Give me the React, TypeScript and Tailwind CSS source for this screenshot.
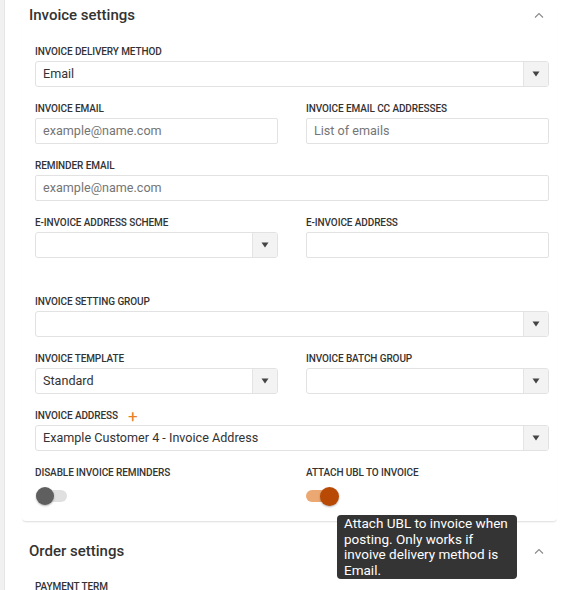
import React from "react";

const font = { fontFamily: "Roboto, 'Noto Sans', sans-serif" };

function Label({ children }: { children: React.ReactNode }) {
  return (
    <div className="h-[14px] mb-[2px] flex items-center text-[10px] font-medium uppercase text-[#333] leading-[14px] tracking-[-0.1px]">
      {children}
    </div>
  );
}

function Arrow() {
  return (
    <div className="w-[25px] h-full flex items-center justify-center bg-[#f3f3f3] border-l border-[#e4e4e4]">
      <svg width="8" height="6" viewBox="0 0 8 6">
        <path d="M0.5 0.5 L7.5 0.5 L4 5.5 Z" fill="#444" />
      </svg>
    </div>
  );
}

function Select({ value }: { value?: string }) {
  return (
    <div className="h-[26px] flex border border-[#e2e2e2] rounded-[3px] bg-white overflow-hidden">
      <div className="flex-1 flex items-center px-[7px] text-[12.6px] text-[#333]">{value}</div>
      <Arrow />
    </div>
  );
}

function Input({ placeholder }: { placeholder?: string }) {
  return (
    <div className="h-[26px] flex items-center border border-[#e2e2e2] rounded-[2px] bg-white px-[7px] text-[12.6px] text-[#757575]">
      {placeholder}
    </div>
  );
}

function Field({ label, children, extra }: { label: React.ReactNode; children: React.ReactNode; extra?: string }) {
  return (
    <div className={extra || "mb-[15px]"}>
      <Label>{label}</Label>
      {children}
    </div>
  );
}

function Chevron() {
  return (
    <svg width="10" height="6" viewBox="0 0 10 6" fill="none">
      <path d="M1 5.5 L5 1.5 L9 5.5" stroke="#8a8a8a" strokeWidth="1.1" />
    </svg>
  );
}

export default function App() {
  return (
    <div className="w-[573px] h-[590px] overflow-hidden bg-white flex relative" style={font}>
      <div className="w-[5px] h-full bg-[#f1f1f1] border-r border-[#e6e6e6]" />
      <div className="flex-1 pl-[17px] pr-[16px]">
        <div className="rounded-b-[4px] border-b border-[#e5e5e5] shadow-[0_1px_1px_rgba(0,0,0,0.04)]">
          <div className="h-[30px] flex items-center justify-between pl-[7px] pr-[13px]">
            <div className="text-[15px] font-medium text-[#333]">Invoice settings</div>
            <Chevron />
          </div>
          <div className="pl-[13px] pr-[8px] pt-[15px]">
            <Field label="Invoice delivery method">
              <Select value="Email" />
            </Field>
            <div className="grid grid-cols-2 gap-x-[28px]">
              <Field label="Invoice email">
                <Input placeholder="example@name.com" />
              </Field>
              <Field label="Invoice email cc addresses">
                <Input placeholder="List of emails" />
              </Field>
            </div>
            <Field label="Reminder email">
              <Input placeholder="example@name.com" />
            </Field>
            <div className="grid grid-cols-2 gap-x-[28px]">
              <Field label="E-invoice address scheme">
                <Select />
              </Field>
              <Field label="E-invoice address" extra="mb-[37px]">
                <Input />
              </Field>
            </div>
            <Field label="Invoice setting group">
              <Select />
            </Field>
            <div className="grid grid-cols-2 gap-x-[28px]">
              <Field label="Invoice template">
                <Select value="Standard" />
              </Field>
              <Field label="Invoice batch group">
                <Select />
              </Field>
            </div>
            <Field
              label={
                <span className="flex items-center">
                  INVOICE ADDRESS
                  <span className="ml-[10px] text-[#e8802a] text-[17px] font-normal leading-none">+</span>
                </span>
              }
            >
              <Select value="Example Customer 4 - Invoice Address" />
            </Field>
            <div className="grid grid-cols-2 gap-x-[28px] pb-[15px]">
              <div>
                <Label>Disable invoice reminders</Label>
                <div className="relative w-[32px] h-[20px] mt-[6px]">
                  <div className="absolute left-[1px] top-[4px] w-[31px] h-[12px] rounded-full bg-[#e0e0e0]" />
                  <div className="absolute left-[1px] top-[1px] w-[18px] h-[18px] rounded-full bg-[#5f5f5f] shadow-[0_1px_2px_rgba(0,0,0,0.3)]" />
                </div>
              </div>
              <div>
                <Label>Attach UBL to invoice</Label>
                <div className="relative w-[34px] h-[20px] mt-[6px]">
                  <div className="absolute left-0 top-[4px] w-[31px] h-[12px] rounded-full bg-[#eca872]" />
                  <div className="absolute left-[14px] top-[1px] w-[19px] h-[19px] rounded-full bg-[#b94a05] shadow-[0_1px_2px_rgba(0,0,0,0.3)]" />
                </div>
              </div>
            </div>
          </div>
        </div>
        <div className="h-[58px] flex items-center justify-between pl-[7px] pr-[13px]">
          <div className="text-[15px] font-medium text-[#333]">Order settings</div>
          <Chevron />
        </div>
        <div className="pl-[13px]">
          <Label>Payment term</Label>
        </div>
      </div>
      <div className="absolute left-[337px] top-[515px] w-[180px] h-[64px] rounded-[4px] bg-[#343434] text-white text-[13.5px] leading-[15.7px] pl-[7px] pr-[4px] pt-[1px]">
        Attach UBL to invoice when posting. Only works if invoive delivery method is Email.
      </div>
    </div>
  );
}
